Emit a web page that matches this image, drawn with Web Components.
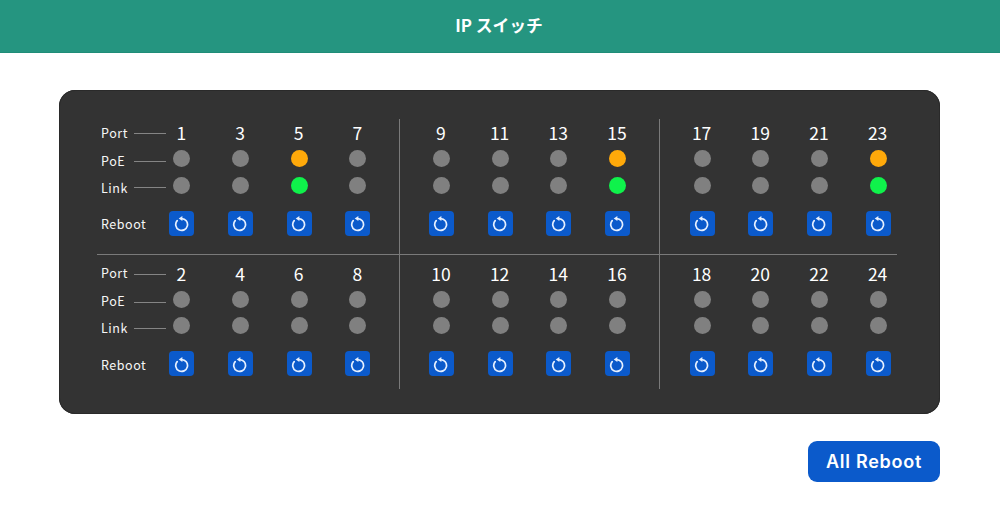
<!DOCTYPE html>
<html lang="ja">
<head>
<meta charset="utf-8">
<title>IP スイッチ</title>
<style>
html,body{margin:0;padding:0;background:#fff}
body{font-family:"Noto Sans CJK JP","Noto Sans",sans-serif;width:1000px;height:531px;overflow:hidden}
</style>
</head>
<body>
<sw-app></sw-app>
<script>
const def=(name,css,html,init)=>{
  customElements.define(name,class extends HTMLElement{
    constructor(){super();this.attachShadow({mode:'open'}).innerHTML=`<style>${css}</style>${html}`;}
    connectedCallback(){if(init&&!this._i){this._i=1;init(this);}}
  });
};
def('sw-header',`
:host{display:flex;align-items:center;justify-content:center;height:53px;background:#259580;box-sizing:border-box;border-bottom:1px solid #1f8d78;color:#fff;font:700 16.8px/1 "Noto Sans CJK JP","Noto Sans",sans-serif;padding:0 2px 2px 0}
`,`<slot></slot>`);
def('sw-led',`
:host{display:block;width:17px;height:17px;border-radius:50%;background:#808080;margin-left:1px}
:host([state=poe]){background:#ffa90a}
:host([state=link]){background:#0ff24b}
`,``);
def('sw-reboot',`
:host{display:flex;align-items:center;justify-content:center;width:25px;height:25px;border-radius:4px;background:#0b5acb;margin-left:1px}
svg{width:18px;height:18px;display:block}
`,`<svg viewBox="0 0 18 18" fill="none" stroke="#e6f0ff" stroke-width="1.7" stroke-linecap="round"><path d="M8.6 4.6A5.9 5.9 0 1 1 4.2 6.6"/><path d="M9.4 1.9 5.7 4.5l3.7 2.4z" fill="#e6f0ff" stroke="none"/></svg>`);
def('sw-legend',`
:host{display:grid;grid-template-rows:28px 23px 30px 46px;width:55px;font:400 12.5px/1 "Noto Sans CJK JP","Noto Sans",sans-serif;letter-spacing:.55px;color:#f6f6f6}
.r{display:flex;align-items:center;position:relative;width:69px;white-space:nowrap;box-sizing:border-box;padding-left:4px}
.d{padding-top:5px}
.k{padding-top:6px}
.b{padding-top:3px}
.l{height:1px;background:#858585;position:absolute;left:37px;width:32px;top:14px}
`,`<div class="r">Port<span class="l"></span></div><div class="r d">PoE<span class="l" style="top:14px"></span></div><div class="r k">Link<span class="l" style="top:17px"></span></div><div class="r b">Reboot</div>`);
def('sw-port',`
:host{display:grid;grid-template-rows:28px 23px 30px 46px;justify-items:center;align-items:center;width:58.67px}
.n{font:400 17.5px/1 "Noto Sans CJK JP","Noto Sans",sans-serif;color:#fff}
`,`<div class="n"></div><sw-led id="p"></sw-led><sw-led id="k"></sw-led><sw-reboot></sw-reboot>`,
el=>{
  const s=el.shadowRoot;
  s.querySelector('.n').textContent=el.getAttribute('n');
  if(el.hasAttribute('on')){s.getElementById('p').setAttribute('state','poe');s.getElementById('k').setAttribute('state','link');}
});
def('sw-group',`
:host{display:flex;box-sizing:border-box;padding-left:12px;width:261px;border-right:1px solid #7a7a7a}
:host(:first-child){padding-left:0;width:303px}
:host(:last-child){border-right:0;width:247px}
`,`<slot></slot>`);
def('sw-bank',`
:host{display:flex;align-items:stretch;height:135px}
:host([second]){height:134px}
::slotted(sw-group){padding-bottom:8px;padding-top:0}
:host([second]) ::slotted(sw-group){padding-top:4.6px;padding-bottom:2px}
`,`<slot></slot>`);
def('sw-panel',`
:host{display:block;box-sizing:border-box;width:881px;height:324px;margin:37px 0 0 59px;padding:29px 33px 0 38px;background:#333;border-radius:16px;box-shadow:inset 0 0 0 1px #2a2a2a}
.rule{height:1px;background:#7a7a7a;margin:0 10px 0 0}
`,`<slot name="a"></slot><div class="rule"></div><slot name="b"></slot>`);
def('sw-button',`
:host{display:flex;align-items:center;justify-content:center;width:132px;height:41px;border-radius:9px;background:#0b5acb;color:#fff;font:600 18px/1 Inter,"Noto Sans",sans-serif;letter-spacing:.75px}
`,`<slot></slot>`);
def('sw-app',`
:host{display:block}
.foot{display:flex;justify-content:flex-end;margin:27px 60px 0 0}
`,`<sw-header>IP スイッチ</sw-header><sw-panel id="panel"></sw-panel><div class="foot"><sw-button>All Reboot</sw-button></div>`,
el=>{
  const panel=el.shadowRoot.getElementById('panel');
  [[1,'a'],[2,'b']].forEach(([start,slot],b)=>{
    const bank=document.createElement('sw-bank');
    bank.slot=slot; if(b)bank.setAttribute('second','');
    for(let g=0;g<3;g++){
      const grp=document.createElement('sw-group');
      if(g===0)grp.appendChild(document.createElement('sw-legend'));
      for(let i=0;i<4;i++){
        const p=document.createElement('sw-port');
        p.setAttribute('n',start+(g*4+i)*2);
        if(!b&&i===2&&g===0||!b&&i===3&&g>0)p.setAttribute('on','');
        grp.appendChild(p);
      }
      bank.appendChild(grp);
    }
    panel.appendChild(bank);
  });
});
</script>
</body>
</html>
